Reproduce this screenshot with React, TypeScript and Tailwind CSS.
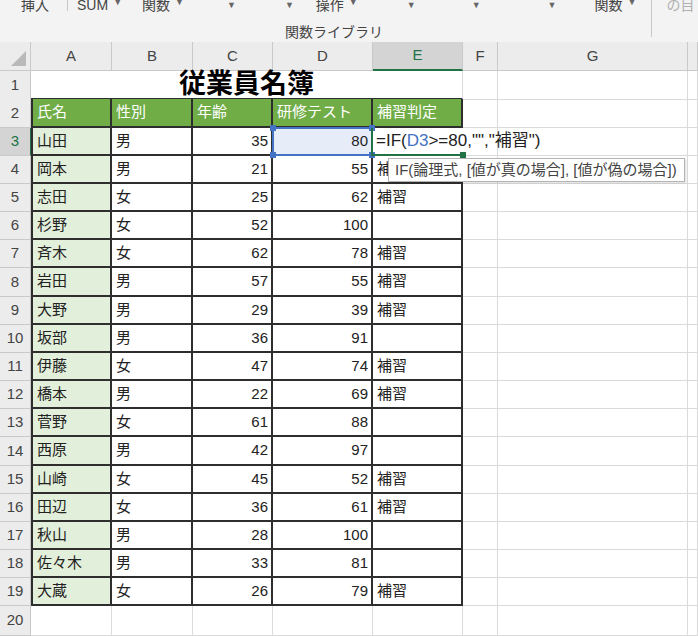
import React from "react";

interface Staff {
  name: string;
  sex: string;
  age: number;
  score: number;
  result: string;
}

const staff: Staff[] = [
  { name: "山田", sex: "男", age: 35, score: 80, result: "" },
  { name: "岡本", sex: "男", age: 21, score: 55, result: "補習" },
  { name: "志田", sex: "女", age: 25, score: 62, result: "補習" },
  { name: "杉野", sex: "女", age: 52, score: 100, result: "" },
  { name: "斉木", sex: "女", age: 62, score: 78, result: "補習" },
  { name: "岩田", sex: "男", age: 57, score: 55, result: "補習" },
  { name: "大野", sex: "男", age: 29, score: 39, result: "補習" },
  { name: "坂部", sex: "男", age: 36, score: 91, result: "" },
  { name: "伊藤", sex: "女", age: 47, score: 74, result: "補習" },
  { name: "橋本", sex: "男", age: 22, score: 69, result: "補習" },
  { name: "菅野", sex: "女", age: 61, score: 88, result: "" },
  { name: "西原", sex: "男", age: 42, score: 97, result: "" },
  { name: "山崎", sex: "女", age: 45, score: 52, result: "補習" },
  { name: "田辺", sex: "女", age: 36, score: 61, result: "補習" },
  { name: "秋山", sex: "男", age: 28, score: 100, result: "" },
  { name: "佐々木", sex: "男", age: 33, score: 81, result: "" },
  { name: "大蔵", sex: "女", age: 26, score: 79, result: "補習" },
];

const cols = "grid grid-cols-[31px_81px_81px_80px_100px_90px_35px_190px_1fr]";
const grid = "flex items-center border-r border-b border-[#dadada] whitespace-nowrap";
const dark = "flex items-center border-r-2 border-b-2 border-[#2e2e2e] whitespace-nowrap";
const rowHead = "flex items-center justify-center border-r border-b border-[#c9c9c9] bg-[#ececec] text-[15px] text-[#444]";

function Caret() {
  return <span className="shrink-0 ml-[5px] text-[9px] text-[#666] relative top-[-2px]">▼</span>;
}

function Ribbon() {
  return (
    <div className="h-[42px] bg-[#f3f3f3] text-[14px] text-[#444] relative overflow-hidden whitespace-nowrap">
      <div className="flex items-center h-[16px] -mt-[3px] w-max">
        <span className="shrink-0 ml-[21px]">挿入</span>
        <span className="shrink-0 ml-[18px] w-px h-[12px] bg-[#c8c8c8]" />
        <span className="shrink-0 ml-[9px]">SUM</span>
        <Caret />
        <span className="shrink-0 ml-[20px]">関数</span>
        <Caret />
        <span className="shrink-0 ml-[38px]"><Caret /></span>
        <span className="shrink-0 ml-[44px]"><Caret /></span>
        <span className="shrink-0 ml-[22px]">操作</span>
        <Caret />
        <span className="shrink-0 ml-[44px]"><Caret /></span>
        <span className="shrink-0 ml-[51px]"><Caret /></span>
        <span className="shrink-0 ml-[62px]"><Caret /></span>
        <span className="shrink-0 ml-[38px]">関数</span>
        <Caret />
        <span className="shrink-0 ml-[15px] w-px h-[40px] bg-[#c8c8c8] self-start" />
        <span className="shrink-0 ml-[14px] text-[#b0b0b0]">の目</span>
      </div>
      <div className="ml-[285px] mt-[12px] text-[14px] text-[#444] leading-none">関数ライブラリ</div>
    </div>
  );
}

function HeaderStrip() {
  const letters = ["A", "B", "C", "D", "E", "F", "G", ""];
  return (
    <div className={`${cols} h-[29px] bg-[#ececec] text-[15px] text-[#444]`}>
      <div className="border-r border-b border-[#c9c9c9]">
        <svg width="30" height="28" viewBox="0 0 30 28">
          <polygon points="26,9 26,24 11,24" fill="#b9b9b9" />
        </svg>
      </div>
      {letters.map((l) =>
        l === "E" ? (
          <div key="E" className="flex items-center justify-center bg-[#d4d4d4] border-r border-[#c9c9c9] border-b-2 border-b-[#217346] text-[#217346]">
            E
          </div>
        ) : (
          <div key={l || "H"} className="flex items-center justify-center border-r border-b border-[#c9c9c9]">
            {l}
          </div>
        )
      )}
    </div>
  );
}

function DataRow({ n, s }: { n: number; s: Staff }) {
  const h = n === 8 || n === 14 ? "h-[29px]" : "h-[28px]";
  const active = n === 3;
  return (
    <div className={`${cols} ${h} text-[15px] text-[#222]`}>
      <div
        className={
          active
            ? "flex items-center justify-center border-r border-b border-r-[#217346] border-b-[#c9c9c9] bg-[#d4d4d4] text-[15px] text-[#217346]"
            : rowHead
        }
      >
        {n}
      </div>
      <div className={`${dark} border-l-2 bg-[#e2efda] pl-[4px]`}>{s.name}</div>
      <div className={`${dark} pl-[4px]`}>{s.sex}</div>
      <div className={`${dark} justify-end pr-[3px]`}>{s.age}</div>
      {active ? (
        <div className={`${dark} justify-end pr-[3px] bg-[#e7edf8] relative`}>
          {s.score}
          <div className="absolute -left-px -top-px right-[-2px] bottom-[-2px] border-2 border-[#4472c4]" />
          <div className="absolute -left-[3px] -top-[3px] w-[6px] h-[6px] bg-[#4472c4]" />
          <div className="absolute -right-[4px] -top-[3px] w-[6px] h-[6px] bg-[#4472c4]" />
          <div className="absolute -left-[3px] -bottom-[4px] w-[6px] h-[6px] bg-[#4472c4]" />
          <div className="absolute -right-[4px] -bottom-[4px] w-[6px] h-[6px] bg-[#4472c4]" />
        </div>
      ) : (
        <div className={`${dark} justify-end pr-[3px]`}>{s.score}</div>
      )}
      {active ? (
        <div className="flex items-center border-b-2 border-[#217346] whitespace-nowrap pl-[3px] relative z-10 text-[17px]">
          <span>
            =IF(<span className="text-[#4472c4]">D3</span>&gt;=80,"","補習")
          </span>
          <div className="absolute -left-[2px] top-0 bottom-[-2px] w-[2px] bg-[#217346]" />
          <div className="absolute -right-[3px] -bottom-[4px] w-[6px] h-[6px] bg-[#217346]" />
        </div>
      ) : (
        <div className={`${dark} pl-[4px]`}>{s.result}</div>
      )}
      <div className={grid} />
      <div className={grid} />
      <div className={grid} />
    </div>
  );
}

export default function App() {
  return (
    <div className="w-[698px] h-[636px] overflow-hidden bg-white relative font-['Liberation_Sans','Noto_Sans_CJK_JP',sans-serif]">
      <Ribbon />
      <HeaderStrip />

      <div className={`${cols} h-[28px]`}>
        <div className={rowHead}>1</div>
        <div className="col-span-5 flex items-center justify-center border-r border-[#dadada] border-b-2 border-b-[#2e2e2e] text-[27px] font-bold text-black leading-none">
          従業員名簿
        </div>
        <div className={grid} />
        <div className={grid} />
        <div className={grid} />
      </div>

      <div className={`${cols} h-[29px] text-[15px] text-white`}>
        <div className={rowHead}>2</div>
        {["氏名", "性別", "年齢", "研修テスト", "補習判定"].map((t, i) => (
          <div key={t} className={`${dark} ${i === 0 ? "border-l-2" : ""} bg-[#70ad47] pl-[4px]`}>
            {t}
          </div>
        ))}
        <div className={grid} />
        <div className={grid} />
        <div className={grid} />
      </div>

      {staff.map((s, i) => (
        <DataRow key={i} n={i + 3} s={s} />
      ))}

      <div className={`${cols} h-[30px]`}>
        <div className={rowHead}>20</div>
        {[0, 1, 2, 3, 4, 5, 6, 7].map((k) => (
          <div key={k} className={grid} />
        ))}
      </div>

      <div className="absolute left-[388px] top-[158px] w-[297px] h-[24px] bg-white border border-[#b4b4b4] shadow-[1px_1px_2px_rgba(0,0,0,0.15)] flex items-center pl-[6px] text-[15px] text-[#444] whitespace-nowrap overflow-hidden">
        IF(論理式, [値が真の場合], [値が偽の場合])
      </div>
    </div>
  );
}
